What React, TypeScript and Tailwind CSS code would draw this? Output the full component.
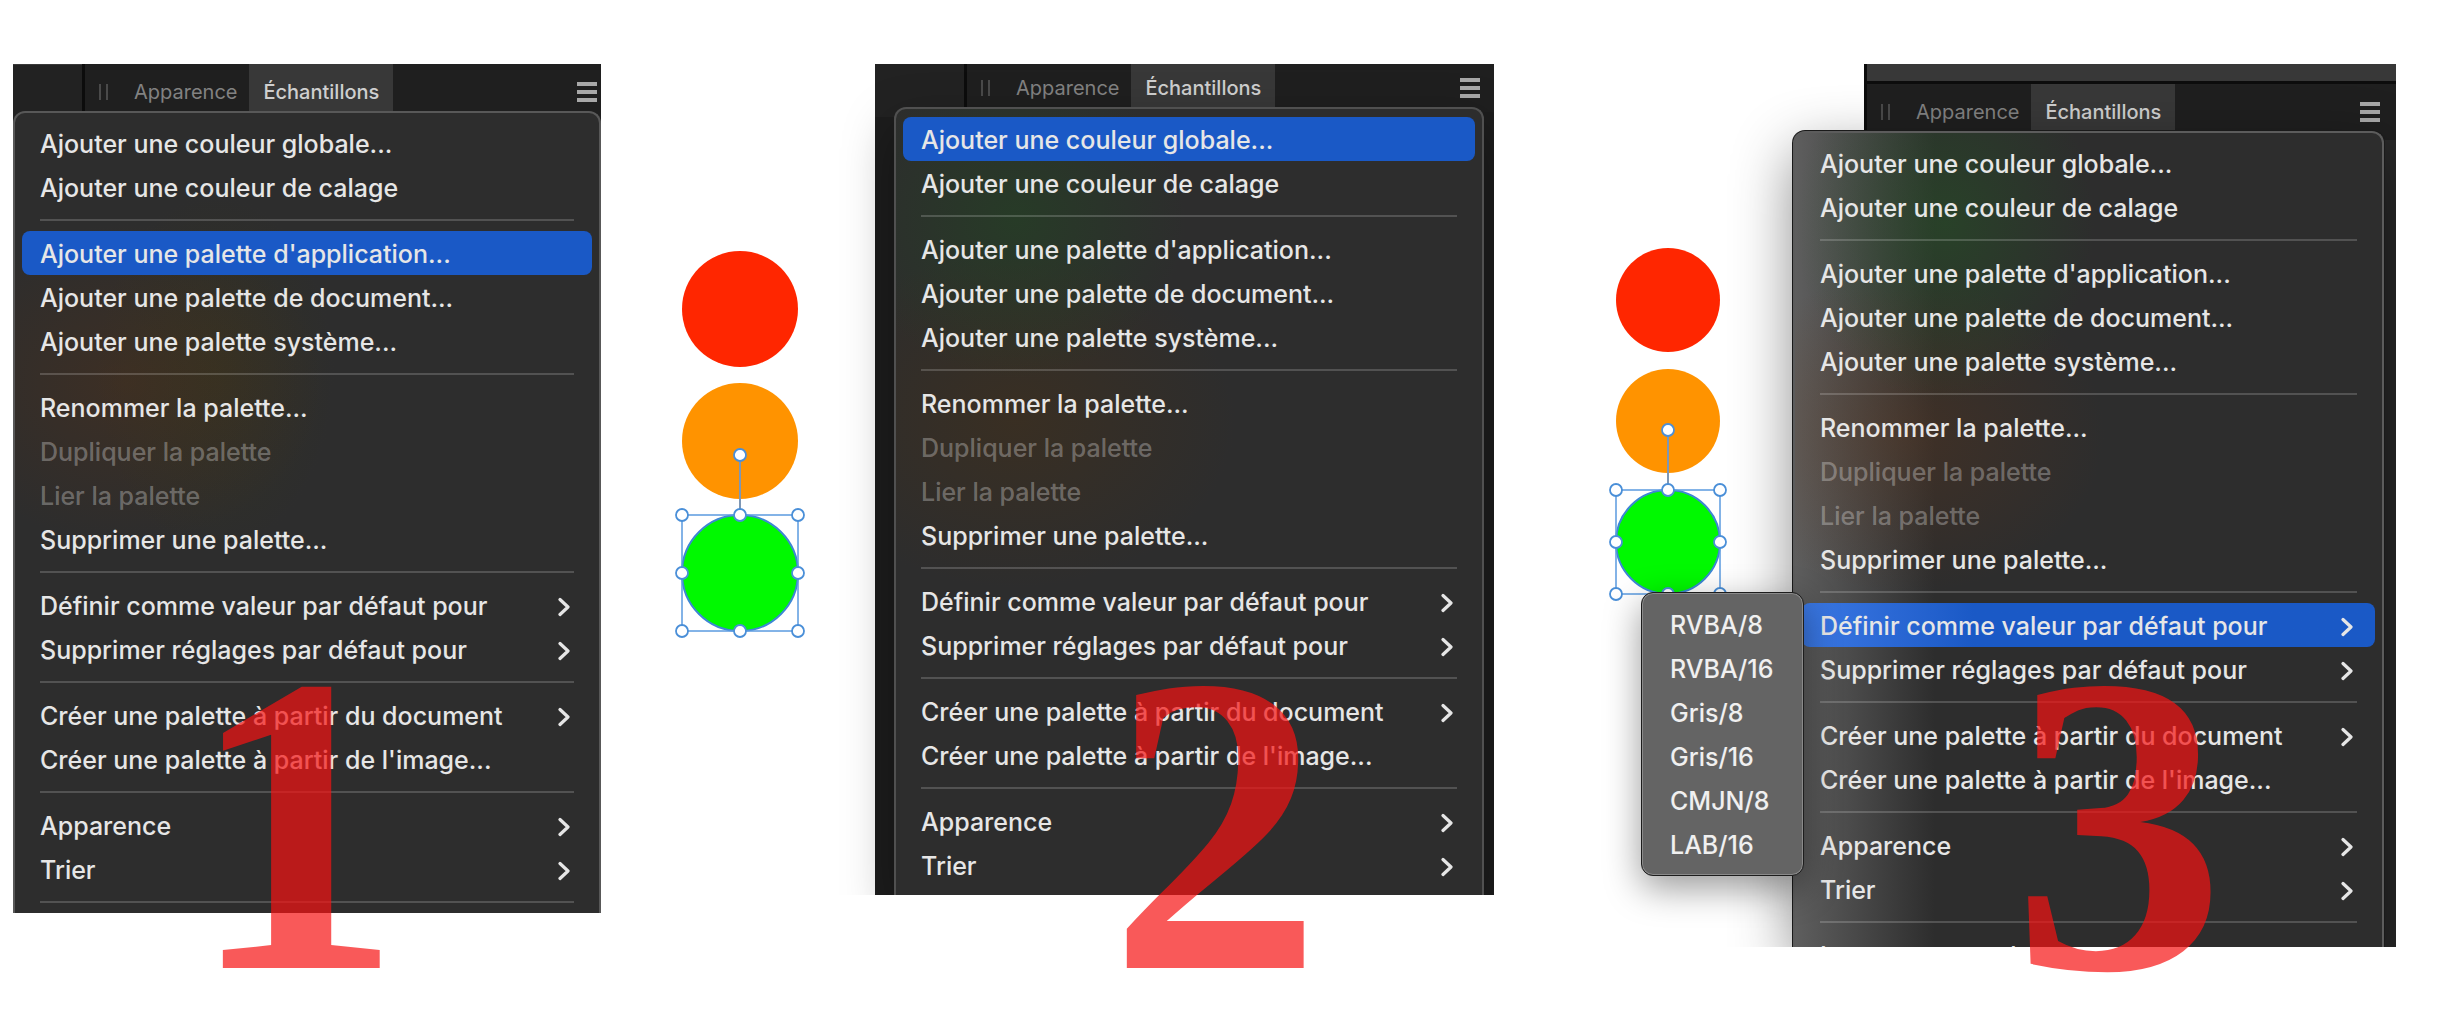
import { ReactNode } from "react";
import { clsx } from "clsx";

type Item = { label: string; disabled?: boolean; arrow?: boolean };

const groups: Item[][] = [
  [{ label: "Ajouter une couleur globale..." }, { label: "Ajouter une couleur de calage" }],
  [
    { label: "Ajouter une palette d'application..." },
    { label: "Ajouter une palette de document..." },
    { label: "Ajouter une palette système..." },
  ],
  [
    { label: "Renommer la palette..." },
    { label: "Dupliquer la palette", disabled: true },
    { label: "Lier la palette", disabled: true },
    { label: "Supprimer une palette..." },
  ],
  [
    { label: "Définir comme valeur par défaut pour", arrow: true },
    { label: "Supprimer réglages par défaut pour", arrow: true },
  ],
  [
    { label: "Créer une palette à partir du document", arrow: true },
    { label: "Créer une palette à partir de l'image..." },
  ],
  [
    { label: "Apparence", arrow: true },
    { label: "Trier", arrow: true },
  ],
];

const formats = ["RVBA/8", "RVBA/16", "Gris/8", "Gris/16", "CMJN/8", "LAB/16"];

const Separator = () => (
  <div role="separator" className="mx-[18px] flex h-[22px] items-center">
    <div className="h-[2px] w-full bg-white/18" />
  </div>
);

const Chevron = () => (
  <svg width="12" height="20" viewBox="0 0 12 20" fill="none" className="mr-1">
    <path d="M2 2.5 L10 10 L2 17.5" stroke="#e6e6e6" strokeWidth="3.2" strokeLinecap="round" strokeLinejoin="round" />
  </svg>
);

const Submenu = () => (
  <div
    role="menu"
    className="absolute top-0 right-full z-10 -mt-[11px] -mr-0.5 w-[163px] rounded-xl border border-[#1d1d1d] bg-[#646464] py-[9px] shadow-[inset_0_0_0_1px_#8a8a8a,0_12px_36px_rgba(0,0,0,0.4)]"
  >
    {formats.map((name) => (
      <button key={name} role="menuitem" className="block h-11 w-full pt-[3px] pl-7 text-left whitespace-nowrap text-white/90">
        {name}
      </button>
    ))}
  </div>
);

const MenuRow: React.FC<{ item: Item; className?: string }> = ({ item, className }) => (
  <button
    role="menuitem"
    disabled={item.disabled}
    className={clsx(
      "flex h-11 w-full items-center justify-between rounded-lg px-[18px] pt-[3px] text-left whitespace-nowrap",
      item.disabled && "text-white/30",
      className
    )}
  >
    {item.label}
    {item.arrow && <Chevron />}
  </button>
);

const Menu: React.FC<{ active: string; className?: string; submenu?: boolean; children?: ReactNode }> = ({
  active,
  className,
  submenu,
  children,
}) => {
  return (
    <div
      role="menu"
      className={clsx(
        "relative rounded-t-xl border-x-2 border-t-2 px-[7px] pt-2 text-[25px] font-medium text-[#e6e6e6]",
        className
      )}
    >
      {groups.map((group, i) => (
        <div key={i}>
          {i > 0 && <Separator />}
          {group.map((item) => (
            <div key={item.label} className="relative">
              <MenuRow
                item={item}
                className={clsx(
                  item.label === active && (submenu ? "bg-linear-to-r from-[#3b78e4] to-[#1a59c6] to-30%" : "bg-[#1a59c6]")
                )}
              />
              {submenu && item.label === active && <Submenu />}
            </div>
          ))}
        </div>
      ))}
      {children}
    </div>
  );
};

const TabBar: React.FC<{ className?: string }> = ({ className }) => {
  return (
    <div className={clsx("flex items-center bg-[#1f1f1f] text-[20px]", className)}>
      <div className="mx-3.5 flex gap-[5px]">
        <span className="h-4 w-[2px] bg-[#4a4a4a]" />
        <span className="h-4 w-[2px] bg-[#4a4a4a]" />
      </div>
      <button className="h-full px-3 text-[#828282]">Apparence</button>
      <button className="h-full bg-[#383838] px-3.5 font-medium text-[#cfcfcf]">Échantillons</button>
      <button aria-label="Menu" className="ml-auto flex flex-col gap-1">
        <span className="h-1 w-5 bg-[#a8a8a8]" />
        <span className="h-1 w-5 bg-[#a8a8a8]" />
        <span className="h-1 w-5 bg-[#a8a8a8]" />
      </button>
    </div>
  );
};

const Digit: React.FC<{ value: string; className: string }> = ({ value, className }) => (
  <div
    className={clsx(
      "pointer-events-none absolute top-[547px] z-20 -translate-x-1/2 font-['Liberation_Serif',serif] text-[426px] leading-none font-bold text-[rgba(246,18,18,0.7)]",
      className
    )}
  >
    {value}
  </div>
);

// Three lights, the last one selected with its handles
const Lights: React.FC<{ r: number; pitch: number; rotate: number; className?: string }> = ({ r, pitch, rotate, className }) => {
  const c = r + 10;
  const y3 = c + pitch * 2;
  const top = y3 - r;
  const handles = [
    [c, top - rotate],
    [c - r, top],
    [c, top],
    [c + r, top],
    [c - r, y3],
    [c + r, y3],
    [c - r, y3 + r],
    [c, y3 + r],
    [c + r, y3 + r],
  ];
  return (
    <svg width={c * 2} height={y3 + c} className={className}>
      <circle cx={c} cy={c} r={r} fill="#ff2600" />
      <circle cx={c} cy={c + pitch} r={r} fill="#ff9300" />
      <circle cx={c} cy={y3} r={r} fill="#00f900" stroke="#3d87d4" strokeWidth="2" />
      <rect x={c - r} y={top} width={r * 2} height={r * 2} fill="none" stroke="#5b9be0" strokeWidth="1.5" />
      <line x1={c} y1={top - rotate} x2={c} y2={top} stroke="#7d97b5" strokeWidth="2" />
      {handles.map(([x, y], i) => (
        <circle key={i} cx={x} cy={y} r="6" fill="#fff" stroke="#4a8fd8" strokeWidth="1.8" />
      ))}
    </svg>
  );
};

export default function App() {
  return (
    <main className="grid min-h-screen grid-cols-[588fr_274fr_619fr_299fr_603fr] items-start bg-white pt-16 pr-[62px] pl-[13px] font-['Inter',sans-serif]">
      <section className="relative">
        <div className="overflow-hidden bg-[#1f1f1f]">
          <div className="flex h-14 border-t border-[#3a3a3a]">
            <div className="w-[69px] bg-[#222]" />
            <TabBar className="-mt-px h-14 flex-1 border-l-3 border-[#0c0c0c] pr-1" />
          </div>
          <Menu
            active="Ajouter une palette d'application..."
            className="-mt-[9px] border-[#585858] bg-[#2d2d2d] bg-[radial-gradient(ellipse_200px_160px_at_110px_270px,rgba(90,50,20,0.35),transparent),radial-gradient(ellipse_120px_180px_at_200px_260px,rgba(60,60,10,0.25),transparent)]"
          >
            <Separator />
          </Menu>
        </div>
        <Digit value="1" className="left-[48%]" />
      </section>

      <Lights r={58} pitch={132} rotate={60} className="mt-[177px] ml-[71px]" />

      <section className="relative">
        <div className="bg-[#1d1d1d] [clip-path:inset(0_0_0_-40px)]">
          <div className="flex h-[53px]">
            <div className="w-[89px] bg-[#222]" />
            <TabBar className="h-12 flex-1 border-l-3 border-[#0c0c0c] pr-3.5" />
          </div>
          <Menu
            active="Ajouter une couleur globale..."
            className="-mt-2.5 mr-2.5 ml-[19px] border-[#505050] bg-[#2d2d2d] bg-[radial-gradient(ellipse_170px_160px_at_120px_110px,rgba(30,80,30,0.4),transparent),radial-gradient(ellipse_220px_170px_at_120px_310px,rgba(80,50,15,0.35),transparent)] shadow-[0_20px_50px_rgba(0,0,0,0.35)]"
          >
            <div className="h-2" />
          </Menu>
        </div>
        <Digit value="2" className="left-[55%]" />
      </section>

      <Lights r={52} pitch={121} rotate={60} className="mt-[174px] ml-[112px]" />

      <section className="relative">
        <div className="relative [clip-path:inset(0_0_0_-220px)]">
          <div className="absolute inset-y-0 right-0 left-[71px] bg-[#282828]" />
          <div className="relative ml-[71px] border-l-3 border-[#0c0c0c]">
            <div className="h-5 border-b-3 border-[#0c0c0c] bg-[#383838]" />
            <TabBar className="h-14 pr-4" />
          </div>
          <Menu
            submenu
            active="Définir comme valeur par défaut pour"
            className="-mt-[9px] mr-3 border-[#5c5c5c] bg-[#2d2d2d] bg-[radial-gradient(ellipse_150px_180px_at_150px_90px,rgba(35,90,35,0.45),transparent),radial-gradient(ellipse_200px_160px_at_110px_300px,rgba(100,55,25,0.35),transparent),linear-gradient(to_right,#5e5e5e,#2d2d2d_140px)] shadow-[0_0_0_1px_#1a1a1a,0_20px_60px_rgba(0,0,0,0.45)]"
          >
            <Separator />
            <div className="h-3.5 overflow-hidden">
              <MenuRow item={{ label: "Importer une palette", arrow: true }} />
            </div>
          </Menu>
        </div>
        <Digit value="3" className="left-[54%]" />
      </section>
    </main>
  );
}
